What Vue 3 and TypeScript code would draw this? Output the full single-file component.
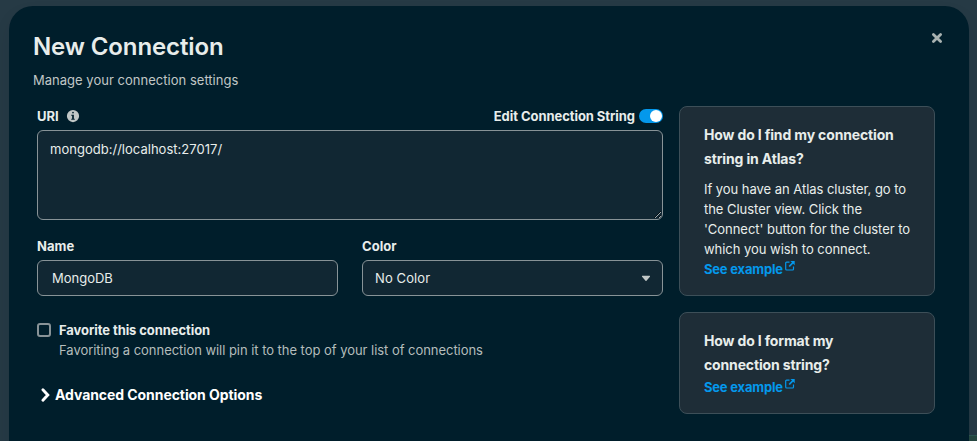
<script setup lang="ts">
import { ref } from 'vue'

interface HelpCard {
  title: string[]
  body: string[]
}

const uri = ref('mongodb://localhost:27017/')
const name = ref('MongoDB')
const editing = ref(true)
const favorite = ref(false)

const cards: HelpCard[] = [
  {
    title: ['How do I find my connection', 'string in Atlas?'],
    body: [
      'If you have an Atlas cluster, go to',
      'the Cluster view. Click the',
      "'Connect' button for the cluster to",
      'which you wish to connect.',
    ],
  },
  { title: ['How do I format my', 'connection string?'], body: [] },
]
</script>

<template>
  <div class="backdrop">
    <section class="modal">
      <header class="header">
        <div>
          <h1>New Connection</h1>
          <p class="subtitle">Manage your connection settings</p>
        </div>
        <button class="close" aria-label="Close">
          <svg width="16" height="16" viewBox="0 0 16 16">
            <path d="M4.4 4.4 11.6 11.6M11.6 4.4 4.4 11.6" stroke="currentColor" stroke-width="2.8" stroke-linecap="round" />
          </svg>
        </button>
      </header>
      <div class="content">
        <form class="form" @submit.prevent>
          <div class="uri-head">
            <label class="label uri-label" for="uri">URI</label>
            <svg class="info" width="14" height="14" viewBox="0 0 16 16">
              <path
                fill="currentColor"
                fill-rule="evenodd"
                d="M8 15A7 7 0 1 0 8 1a7 7 0 0 0 0 14ZM9 4a1 1 0 1 1-2 0 1 1 0 0 1 2 0ZM6 6.5h3V11h1v1.2H6V11h1V7.7H6Z"
              />
            </svg>
            <span class="label edit-label">Edit Connection String</span>
            <button
              class="toggle"
              role="switch"
              :aria-checked="editing"
              :class="{ on: editing }"
              @click="editing = !editing"
            >
              <span class="knob"></span>
            </button>
          </div>
          <textarea id="uri" v-model="uri" class="field uri" spellcheck="false"></textarea>
          <div class="row">
            <div class="column">
              <label class="label name-label" for="name">Name</label>
              <input id="name" v-model="name" class="field input" spellcheck="false" />
            </div>
            <div class="column">
              <span class="label color-label">Color</span>
              <button class="field select">
                <span>No Color</span>
                <svg width="16" height="16" viewBox="0 0 16 16">
                  <path
                    fill="currentColor"
                    d="M8.5 10.8a.7.7 0 0 1-1 0L4.1 6.7c-.3-.4-.1-.9.5-.9h6.8c.6 0 .8.5.5.9Z"
                  />
                </svg>
              </button>
            </div>
          </div>
          <label class="favorite">
            <input v-model="favorite" type="checkbox" class="checkbox" />
            <span>
              <span class="label fav-label">Favorite this connection</span>
              <span class="hint">Favoriting a connection will pin it to the top of your list of connections</span>
            </span>
          </label>
          <button class="advanced">
            <svg width="16" height="16" viewBox="0 0 16 16">
              <path d="M5.9 2.8 10.8 8 5.9 13.2" fill="none" stroke="currentColor" stroke-width="2.9" stroke-linecap="round" />
            </svg>
            <span>Advanced Connection Options</span>
          </button>
        </form>
        <aside class="cards">
          <article v-for="card in cards" :key="card.title[0]" class="card">
            <h2>
              <span v-for="line in card.title" :key="line" class="line">{{ line }}</span>
            </h2>
            <p v-if="card.body.length">
              <span v-for="line in card.body" :key="line" class="line">{{ line }}</span>
            </p>
            <a class="link">
              <span>See example</span>
              <svg width="12" height="12" viewBox="0 0 12 12" fill="none" stroke="currentColor">
                <path d="M5.5 2.2H2.6a.9.9 0 0 0-.9.9v6a.9.9 0 0 0 .9.9h6a.9.9 0 0 0 .9-.9V6.5" stroke-width="1.2" />
                <path d="M5.2 6.5 9.2 2.4" stroke-width="1.7" />
                <path d="M6.4.9h4.3v4.3Z" fill="currentColor" stroke="none" />
              </svg>
            </a>
          </article>
        </aside>
      </div>
    </section>
    <div class="page-edge"></div>
  </div>
</template>

<style>
body {
  margin: 0;
  overflow: hidden;
}
</style>

<style scoped>
* {
  box-sizing: border-box;
}
.backdrop {
  position: relative;
  height: 441px;
  overflow: hidden;
  padding: 6px 8px 0 9px;
  background: #263a45;
  color: #e8edeb;
  font: 13px/20px Inter, 'Liberation Sans', sans-serif;
}
.modal {
  height: 500px;
  border-radius: 24px;
  background: #001e2b;
  box-shadow: 0 8px 20px -8px rgba(0, 30, 43, 0.3);
}
.page-edge {
  position: absolute;
  right: 0;
  bottom: 0;
  width: 8px;
  height: 6px;
  border-top: 1px solid #2a5550;
  background: #24463f;
}
button {
  border: 0;
  padding: 0;
  background: none;
  color: inherit;
  font: inherit;
}
svg {
  display: block;
  flex: none;
}
h1,
h2,
p {
  margin: 0;
}
.header {
  display: flex;
  justify-content: space-between;
  height: 100px;
  padding: 24px 24px 0;
}
h1 {
  font-size: 24px;
  line-height: 34px;
  font-weight: 600;
  letter-spacing: -0.12px;
}
.subtitle {
  margin-top: 6px;
  color: #c1c7c6;
  letter-spacing: 0.02px;
}
.close {
  height: 16px;
  color: #a8b2b1;
}
.content {
  display: flex;
  gap: 16px;
  padding: 0 34px 0 28px;
}
.form {
  width: 626px;
}
.label {
  font-weight: 700;
  font-size: 13px;
  letter-spacing: -0.06px;
  white-space: nowrap;
}
.fav-label {
  letter-spacing: -0.08px;
}
.uri-head {
  display: flex;
  align-items: center;
  height: 20px;
}
.info {
  margin-left: 7px;
  color: #c1c7c6;
}
.edit-label {
  margin-left: auto;
}
.toggle {
  width: 24px;
  height: 14px;
  margin-left: 4px;
  padding: 1px;
  border-radius: 7px;
  background: #5c6c75;
}
.toggle.on {
  background: #0498ec;
}
.knob {
  display: block;
  width: 12px;
  height: 12px;
  border-radius: 50%;
  background: #fff;
}
.on .knob {
  margin-left: auto;
}
.field {
  display: block;
  width: 100%;
  border: 1px solid #889397;
  border-radius: 6px;
  outline: 0;
  background: #112733;
  color: #e8edeb;
  font: inherit;
}
.uri {
  height: 90px;
  margin-top: 4px;
  padding: 8px 12px;
  resize: vertical;
  letter-spacing: 0.02px;
}
.row {
  display: grid;
  grid-template-columns: 301px 301px;
  gap: 24px;
  margin-top: 16px;
}
.column .label {
  display: block;
  margin-bottom: 4px;
  letter-spacing: 0.05px;
}
.input,
.select {
  height: 36px;
}
.input {
  padding: 0 14px;
}
.select {
  display: flex;
  align-items: center;
  justify-content: space-between;
  padding: 0 8px 0 12px;
  letter-spacing: 0.1px;
}
.select svg {
  color: #c1c7c6;
}
.favorite {
  display: flex;
  gap: 8px;
  margin-top: 24px;
}
.favorite .label,
.hint {
  display: block;
}
.checkbox {
  flex: none;
  appearance: none;
  width: 14px;
  height: 14px;
  margin: 3px 0 0;
  border: 2px solid #889397;
  border-radius: 3px;
}
.hint {
  color: #b4bdbc;
  letter-spacing: -0.04px;
  white-space: nowrap;
}
.advanced {
  display: flex;
  align-items: center;
  gap: 2px;
  margin-top: 25px;
  color: #fff;
  font-size: 14px;
  font-weight: 700;
  letter-spacing: -0.07px;
  white-space: nowrap;
}
.cards {
  display: flex;
  flex-direction: column;
  gap: 16px;
  width: 256px;
}
.card {
  padding: 16px 0 16px 24px;
  border: 1px solid #3d4f58;
  border-radius: 8px;
  background: #1e2d37;
}
h2 {
  font-size: 14px;
  line-height: 24px;
  font-weight: 700;
  letter-spacing: -0.15px;
}
.line {
  display: block;
  white-space: nowrap;
}
.card p {
  margin-top: 8px;
  letter-spacing: -0.04px;
}
.link {
  display: flex;
  gap: 1px;
  height: 20px;
  color: #0498ec;
  font-weight: 700;
  letter-spacing: -0.2px;
}
.link svg {
  margin-top: 1px;
}
</style>
